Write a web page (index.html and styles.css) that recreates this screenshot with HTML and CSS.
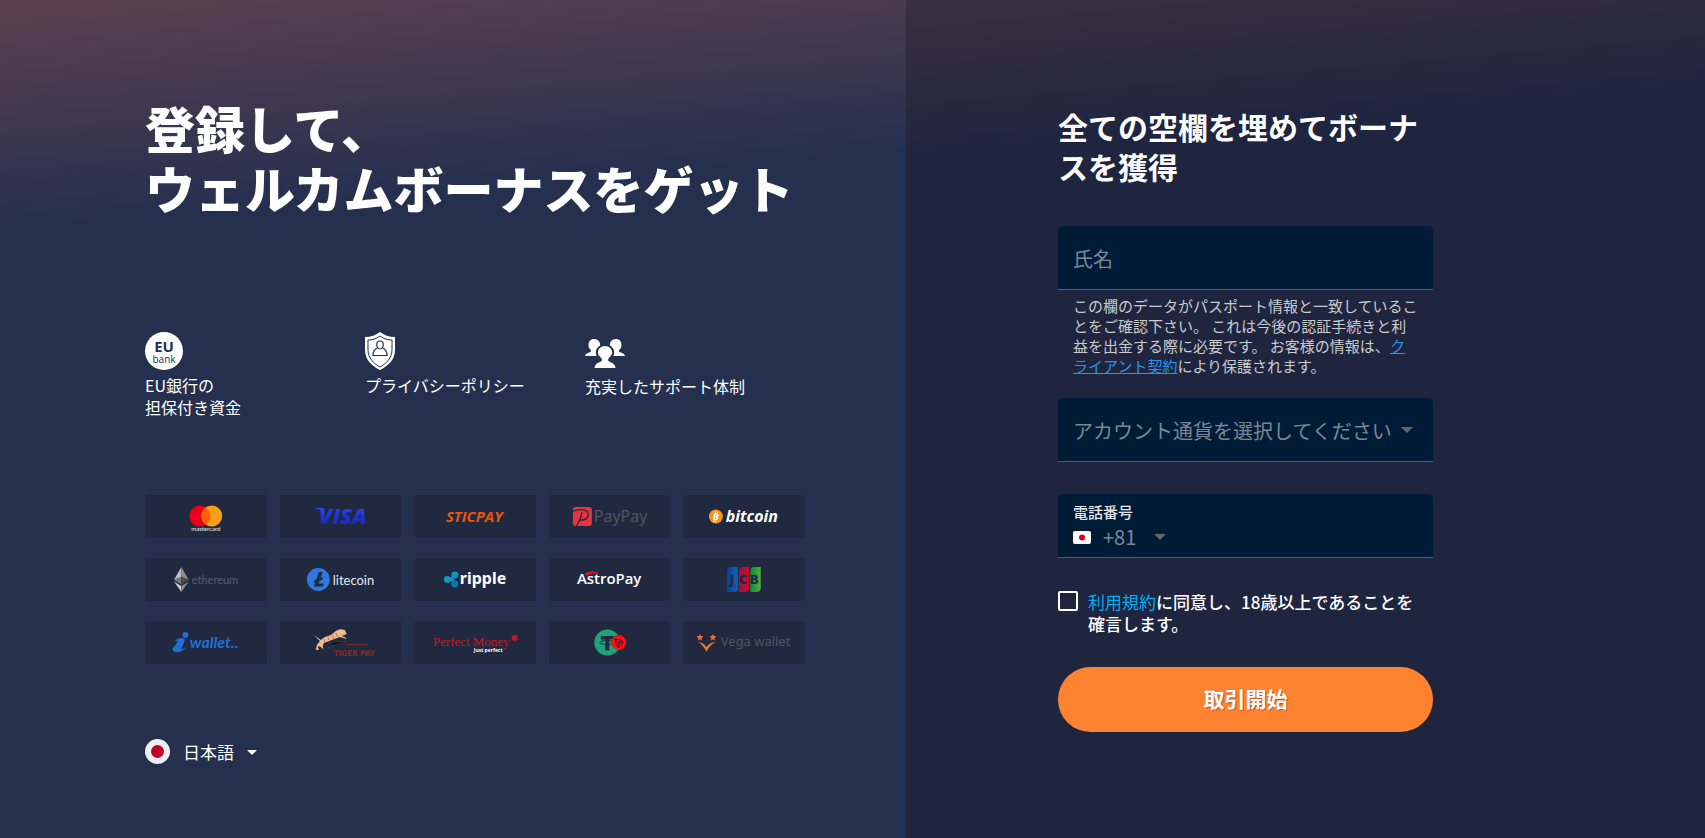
FILE: index.html
```html
<!DOCTYPE html>
<html lang="ja">
<head>
    <meta charset="UTF-8">
    <meta name="viewport" content="width=device-width, initial-scale=1.0">
    <title>登録</title>
    <link rel="stylesheet" href="styles.css">
</head>
<body>
    <main class="promo">
        <h1>登録して、<br>ウェルカムボーナスをゲット</h1>
        <ul class="features">
            <li>
                <svg width="38" height="38" viewBox="0 0 38 38">
                    <circle cx="19" cy="19" r="19" fill="#fff"/>
                    <text class="eu" x="19" y="20" text-anchor="middle">EU</text>
                    <text class="bank" x="19" y="31" text-anchor="middle">bank</text>
                </svg>
                <span>EU銀行の<br>担保付き資金</span>
            </li>
            <li>
                <svg width="30" height="38" viewBox="0 0 30 38">
                    <path d="M15 0C19 3 24 5 30 5V18C30 28 23 34 15 38C7 34 0 28 0 18V5C6 5 11 3 15 0Z" fill="#fff"/>
                    <path d="M15 4C19 7 23 8 27 8V18C27 26 21 32 15 35C9 32 3 26 3 18V8C7 8 11 7 15 4Z" fill="none" stroke="#25304f"/>
                    <path d="M15 9C17 9 18.300 10.500 18.300 12.500C18.300 14.500 17 17 15 17S11.700 14.500 11.700 12.500C11.700 10.500 13 9 15 9Z" fill="none" stroke="#25304f" stroke-width="1.200"/>
                    <path d="M12.500 16C9.500 17 8 19 8 23.500H22C22 19 20.500 17 17.500 16" fill="none" stroke="#25304f" stroke-width="1.200"/>
                </svg>
                <span>プライバシーポリシー</span>
            </li>
            <li class="support">
                <svg width="40" height="30" viewBox="0 0 40 30">
                    <g fill="#fff" stroke="#25304f">
                        <path stroke="none" d="M9 1C13 1 16 4 15 9C14.500 11 13 12 13 13C13 15 17 15 17 18H0C1 14 6 15 6 13C6 11 3.500 11 3.500 7C3.500 3 6 1 9 1Z"/>
                        <path stroke="none" d="M31 1C27 1 24 4 25 9C25.500 11 27 12 27 13C27 15 23 15 23 18H40C39 14 34 15 34 13C34 11 36.500 11 36.500 7C36.500 3 34 1 31 1Z"/>
                        <path stroke-width="2" d="M20 7C15 7 11 11 12 16C12.500 19 16 20 16 22C16 24 8 23 8.500 31H31.500C32 23 24 24 24 22C24 20 27.500 19 28 16C29 11 25 7 20 7Z"/>
                    </g>
                </svg>
                <span>充実したサポート体制</span>
            </li>
        </ul>
        <ul class="payments">
            <li><svg viewBox="0 0 122 43">
                <circle cx="55" cy="21" r="10.500" fill="#eb001b"/>
                <circle cx="67" cy="21" r="10.500" fill="#f79e1b"/>
                <path d="M61 12.400A10.500 10.500 0 0 1 61 29.600A10.500 10.500 0 0 1 61 12.400Z" fill="#ff5f00"/>
                <text class="geo mc" x="61" y="36" text-anchor="middle">mastercard</text>
            </svg></li>
            <li><svg viewBox="0 0 122 43">
                <defs><linearGradient id="visa" x2="0" y2="1"><stop stop-color="#2650ee"/><stop offset="1" stop-color="#1a1fb8"/></linearGradient></defs>
                <text class="visa" x="39" y="29" fill="url(#visa)">VISA</text>
                <path d="M36 13H43L45 18Q42 14 36 14Z" fill="#2650ee"/>
            </svg></li>
            <li><svg viewBox="0 0 122 43"><text class="stic" x="32" y="27">STICPAY</text></svg></li>
            <li><svg viewBox="0 0 122 43">
                <rect x="24" y="12" width="19" height="19" rx="2.500" fill="#e8343f"/>
                <path d="M24 16Q40 12 39.500 20Q38 26 30 25M33 17Q32 25 27.500 31" fill="none" stroke="#202940" stroke-width="1.300"/>
                <text class="humanist paypay" x="45" y="27">PayPay</text>
            </svg></li>
            <li><svg viewBox="0 0 122 43">
                <circle cx="33" cy="21.500" r="7" fill="#f7931a"/>
                <text class="coin" x="33" y="25" text-anchor="middle" transform="rotate(12 33 21.500)">B</text>
                <path d="M32.500 16V18M34.500 16.500V18.500M31 25V27M33 25.500V27.500" stroke="#fff"/>
                <text class="bitcoin" x="43" y="27">bitcoin</text>
            </svg></li>
            <li><svg viewBox="0 0 122 43">
                <path d="M36.500 9L29 22L36.500 19Z" fill="#bdbdbd"/><path d="M36.500 9L44 22L36.500 19Z" fill="#8c8c8c"/>
                <path d="M29 22L36.500 18.500V26.500Z" fill="#777"/><path d="M44 22L36.500 18.500V26.500Z" fill="#4a4a4a"/>
                <path d="M29 23.500L36.500 28V34Z" fill="#c9c9c9"/><path d="M44 23.500L36.500 28V34Z" fill="#888"/>
                <text class="geo ether" x="47" y="26">ethereum</text>
            </svg></li>
            <li><svg viewBox="0 0 122 43">
                <circle cx="38.500" cy="21.500" r="11.500" fill="#2f79dd"/>
                <path d="M39 14H43L40.500 20L43.500 19L42.500 21.500L39.500 23L38.700 25.500H44L43 28.500H34L35.500 24.500L33.500 25L34.500 22.500L36.500 21.500Z" fill="#202940"/>
                <text class="geo lite" x="53" y="27">litecoin</text>
            </svg></li>
            <li><svg viewBox="0 0 122 43">
                <g fill="#1396c4"><circle cx="33.500" cy="21.500" r="3.500"/><circle cx="41" cy="17" r="3.500"/><circle cx="41" cy="26" r="3.500" fill="#087aaa"/><circle cx="38" cy="21.500" r="2.500"/></g>
                <text class="ripple" x="46" y="26">ripple</text>
            </svg></li>
            <li><svg viewBox="0 0 122 43">
                <path d="M36 16Q42 12 49 15Q43 14 38 17Z" fill="#e4151d" stroke="#e4151d"/>
                <text class="astro" x="28" y="26">AstroPay</text>
            </svg></li>
            <li><svg viewBox="0 0 122 43">
                <defs>
                    <linearGradient id="jcbBlue"><stop stop-color="#0b3f8f"/><stop offset="1" stop-color="#0a66b4"/></linearGradient>
                    <linearGradient id="jcbRed"><stop stop-color="#8c1a40"/><stop offset="1" stop-color="#d6062f"/></linearGradient>
                    <linearGradient id="jcbGreen"><stop stop-color="#0b8a3e"/><stop offset="1" stop-color="#52b135"/></linearGradient>
                </defs>
                <path d="M49 9H55V30Q55 34 51 34H44V14Q44 9 49 9Z" fill="url(#jcbBlue)"/>
                <path d="M60 9H66.500V30Q66.500 34 62 34H56V14Q56 9 60 9Z" fill="url(#jcbRed)"/>
                <path d="M71.500 9H78V30Q78 34 73.500 34H67.500V14Q67.500 9 71.500 9Z" fill="url(#jcbGreen)"/>
                <text class="jcb" x="47 56 67" y="26">JCB</text>
            </svg></li>
            <li><svg viewBox="0 0 122 43">
                <circle cx="40.500" cy="14" r="3" fill="#226fd6"/>
                <path d="M29 21Q34 15 40 18Q40 21 36 28Q37 29 42 25Q36 33 30 31Q25 29 30 25L33 20Q31 19 29 21Z" fill="#226fd6"/>
                <text class="wallet" x="45" y="27">wallet..</text>
            </svg></li>
            <li><svg viewBox="0 0 122 43">
                <path d="M34 14L41 19Q44 16 51 14L56 10Q60 7 65 9L67 13L62 15Q66 16 67 18L60 16L52 19Q47 21 44 22Q42 26 44 29L41 26L38 25L39 29L36 29L37 24L40 20Z" fill="#edbb91"/>
                <path d="M52 14L54 18M56 12L58 16M44 18L45 21M48 15L49 19" stroke="#bb7252"/>
                <path d="M47 24L54 21L66 21M48 27H52" stroke="#514743" stroke-dasharray="2 1"/>
                <path d="M66 23.500H88" stroke="#712d26"/>
                <text class="tiger" x="54" y="35">TIGER PAY</text>
            </svg></li>
            <li><svg viewBox="0 0 122 43">
                <text class="perfect" x="19" y="25">Perfect Money</text>
                <circle cx="101" cy="17" r="3" fill="#c21820"/>
                <text class="just" x="60" y="31">Just perfect</text>
            </svg></li>
            <li><svg viewBox="0 0 122 43">
                <circle cx="58.500" cy="21.500" r="13" fill="#1fa37c"/>
                <path d="M52 15H65V18.500H60.500V29.500H56.500V18.500H52Z" fill="#202940"/>
                <ellipse cx="58.500" cy="21.500" rx="7.500" ry="2" fill="none" stroke="#202940"/>
                <circle cx="70" cy="21.500" r="7.500" fill="#ff0d13"/>
                <path d="M65.500 18L72 19L74.500 21L69.500 27ZL70 22L74.500 21M70 22L72 19M70 22L69.500 27" fill="none" stroke="#5c1424"/>
            </svg></li>
            <li><svg viewBox="0 0 122 43">
                <g fill="#f4702c"><path id="star" d="M17 13L18 15L20.500 15.300L18.600 17L19 19.500L17 18.300L15 19.500L15.400 17L13.500 15.300L16 15Z"/><use href="#star" x="13"/>
                <path d="M15 20.500Q21 22 23.500 26Q26 22 33 20.500Q26 25 23.500 31Q21 25 15 20.500Z"/></g>
                <text class="humanist vega" x="38" y="25">Vega wallet</text>
            </svg></li>
        </ul>
        <button class="language" type="button">
            <svg width="25" height="25" viewBox="0 0 25 25"><circle cx="12.500" cy="12.500" r="12.500" fill="#efefef"/><circle cx="12.500" cy="12.500" r="6.500" fill="#bd0029"/></svg>
            <span>日本語</span>
            <i class="caret"></i>
        </button>
    </main>
    <section class="signup">
        <form>
            <h2>全ての空欄を埋めてボーナスを獲得</h2>
            <input class="field" type="text" id="name" placeholder="氏名" aria-label="氏名" aria-describedby="nameHint">
            <p class="hint" id="nameHint">この欄のデータがパスポート情報と一致していることをご確認下さい。 これは今後の認証手続きと利益を出金する際に必要です。 お客様の情報は、<a href="#">クライアント契約</a>により保護されます。</p>
            <div class="selectBox">
                <select class="field" id="currency" aria-label="アカウント通貨">
                    <option>アカウント通貨を選択してください</option>
                </select>
                <i class="caret"></i>
            </div>
            <div class="field phone">
                <label for="phone">電話番号</label>
                <div class="phoneRow">
                    <svg width="18" height="13" viewBox="0 0 18 13"><rect width="18" height="13" rx="2" fill="#fff"/><circle cx="9" cy="6.500" r="3" fill="#d80027"/></svg>
                    <span>+81</span>
                    <i class="caret"></i>
                    <input type="tel" id="phone">
                </div>
            </div>
            <div class="agree">
                <input type="checkbox" id="agree">
                <label for="agree"><a href="#">利用規約</a>に同意し、18歳以上であることを確言します。</label>
            </div>
            <button class="submit" type="submit">取引開始</button>
        </form>
    </section>
</body>
</html>
```

FILE: styles.css
```css
* {
    box-sizing: border-box;
}
body {
    margin: 0;
    min-height: 100vh;
    display: grid;
    grid-template-columns: 906fr 799fr;
    background: linear-gradient(175deg, #5e404f 0%, #25304f 23%);
    color: white;
    font-family: "Noto Sans CJK JP", sans-serif;
    font-size: 16px;
}
h1, h2, p, ul {
    margin: 0;
    padding: 0;
}
ul {
    list-style: none;
}
button, input, select {
    font-family: inherit;
    color: inherit;
}
svg {
    display: block;
}

.promo {
    padding: 97px 101px 70px 145px;
}
h1 {
    font-size: 50px;
    line-height: 60px;
    font-weight: 900;
}
.features {
    display: grid;
    grid-template-columns: repeat(3, 1fr);
    margin-top: 115px;
    line-height: 22px;
}
.features svg {
    margin-bottom: 4px;
}
.features .support {
    padding-top: 6px;
}
.features .support svg {
    margin-bottom: 7px;
}
.eu, .bank {
    fill: #25304f;
    font-family: "Open Sans", sans-serif;
}
.eu {
    font-size: 15px;
    font-weight: 700;
}
.bank {
    font-size: 10px;
}

.payments {
    display: grid;
    grid-template-columns: repeat(5, 1fr);
    gap: 20px 13px;
    margin-top: 77px;
}
.payments li {
    background: #202940;
    border-radius: 3px;
}
.payments svg {
    width: 100%;
    height: 43px;
}
.geo {
    font-family: Lato, sans-serif;
    fill: #e8eaf0;
}
.humanist {
    font-family: "Noto Sans", sans-serif;
    fill: #515560;
}
.mc {
    font-size: 6px;
}
.visa {
    font: italic 900 22px "Open Sans", sans-serif;
}
.stic {
    font: italic 700 15px "Open Sans", sans-serif;
    fill: #e9560c;
}
.paypay {
    font-size: 16px;
}
.coin {
    font: 700 9px "Open Sans", sans-serif;
    fill: white;
}
.bitcoin {
    font: italic 700 16px "Open Sans", sans-serif;
    fill: white;
}
.ether {
    font-size: 11px;
    fill: #565d6b;
}
.lite {
    font-size: 13px;
}
.ripple {
    font: 700 16px "Noto Sans", sans-serif;
    fill: white;
}
.astro {
    font: 600 15px "Open Sans", sans-serif;
    fill: white;
}
.jcb {
    font: 700 12px "DejaVu Sans", sans-serif;
    fill: #202940;
}
.wallet {
    font: italic 700 16px Lato, sans-serif;
    fill: #226fd6;
}
.tiger {
    font: 700 8px "Liberation Sans Narrow", "DejaVu Sans Condensed", sans-serif;
    fill: #7c3026;
}
.perfect {
    font: 13px "Liberation Serif", serif;
    fill: #c21820;
}
.just {
    font: 700 5px "Open Sans", sans-serif;
    fill: white;
}
.vega {
    font-size: 13px;
}

.language {
    display: flex;
    align-items: center;
    gap: 13px;
    margin-top: 75px;
    padding: 0;
    border: 0;
    background: none;
    font-size: 17px;
    line-height: 25px;
}
.caret {
    border: 6px solid transparent;
    border-top-color: #656565;
    border-bottom: 0;
}
.language .caret {
    border-width: 5px 5px 0;
    border-top-color: white;
    margin-top: 2px;
}

.signup {
    padding: 106px 152px 70px;
    background: linear-gradient(175deg, #3b2f3f 0, #1f253f 155px);
}
form {
    max-width: 375px;
}
h2 {
    font-size: 30px;
    line-height: 40px;
    margin-bottom: 40px;
}
.field {
    display: block;
    width: 100%;
    height: 64px;
    padding: 2px 15px 0;
    background: #001b35;
    border: 0;
    border-bottom: 1px solid #595b5e;
    border-radius: 5px 5px 0 0;
    font-size: 20px;
    outline: 0;
}
.field::placeholder {
    color: #7b8794;
    opacity: 1;
}
.hint {
    padding: 6px 15px 22px;
    font-size: 15px;
    line-height: 20px;
    color: #cacbcd;
}
.hint a {
    color: #2794f1;
}
.selectBox {
    display: grid;
    align-items: center;
    margin-bottom: 32px;
}
.selectBox > * {
    grid-area: 1 / 1;
}
.selectBox .caret {
    justify-self: end;
    margin-right: 20px;
}
select.field {
    appearance: none;
    color: #7b8794;
}
.phone {
    padding-top: 8px;
}
.phone label {
    display: block;
    font-size: 15px;
    font-weight: 500;
    line-height: 20px;
    color: #e5e8eb;
}
.phoneRow {
    display: flex;
    align-items: center;
    color: #7b8794;
    line-height: 30px;
}
.phoneRow span {
    margin: 0 18px 0 12px;
}
.phoneRow input {
    flex: 1;
    min-width: 0;
    border: 0;
    background: none;
    outline: 0;
    font-size: 20px;
    height: 28px;
}
.agree {
    display: flex;
    align-items: flex-start;
    gap: 10px;
    margin: 33px 0 32px;
    padding-right: 10px;
    font-size: 17px;
    font-weight: 500;
    line-height: 22px;
}
.agree input {
    appearance: none;
    flex: none;
    width: 20px;
    height: 20px;
    margin: 0;
    border: 2px solid white;
    border-radius: 2px;
}
.agree a {
    color: #00aeef;
    font-weight: 400;
    text-decoration: none;
}
.submit {
    width: 100%;
    height: 65px;
    padding: 0 0 3px;
    border: 0;
    border-radius: 33px;
    background: #ff8231;
    color: white;
    font-size: 21px;
    font-weight: 700;
    text-shadow: 1px 1px 1px rgba(0, 0, 0, 0.3);
}
```
